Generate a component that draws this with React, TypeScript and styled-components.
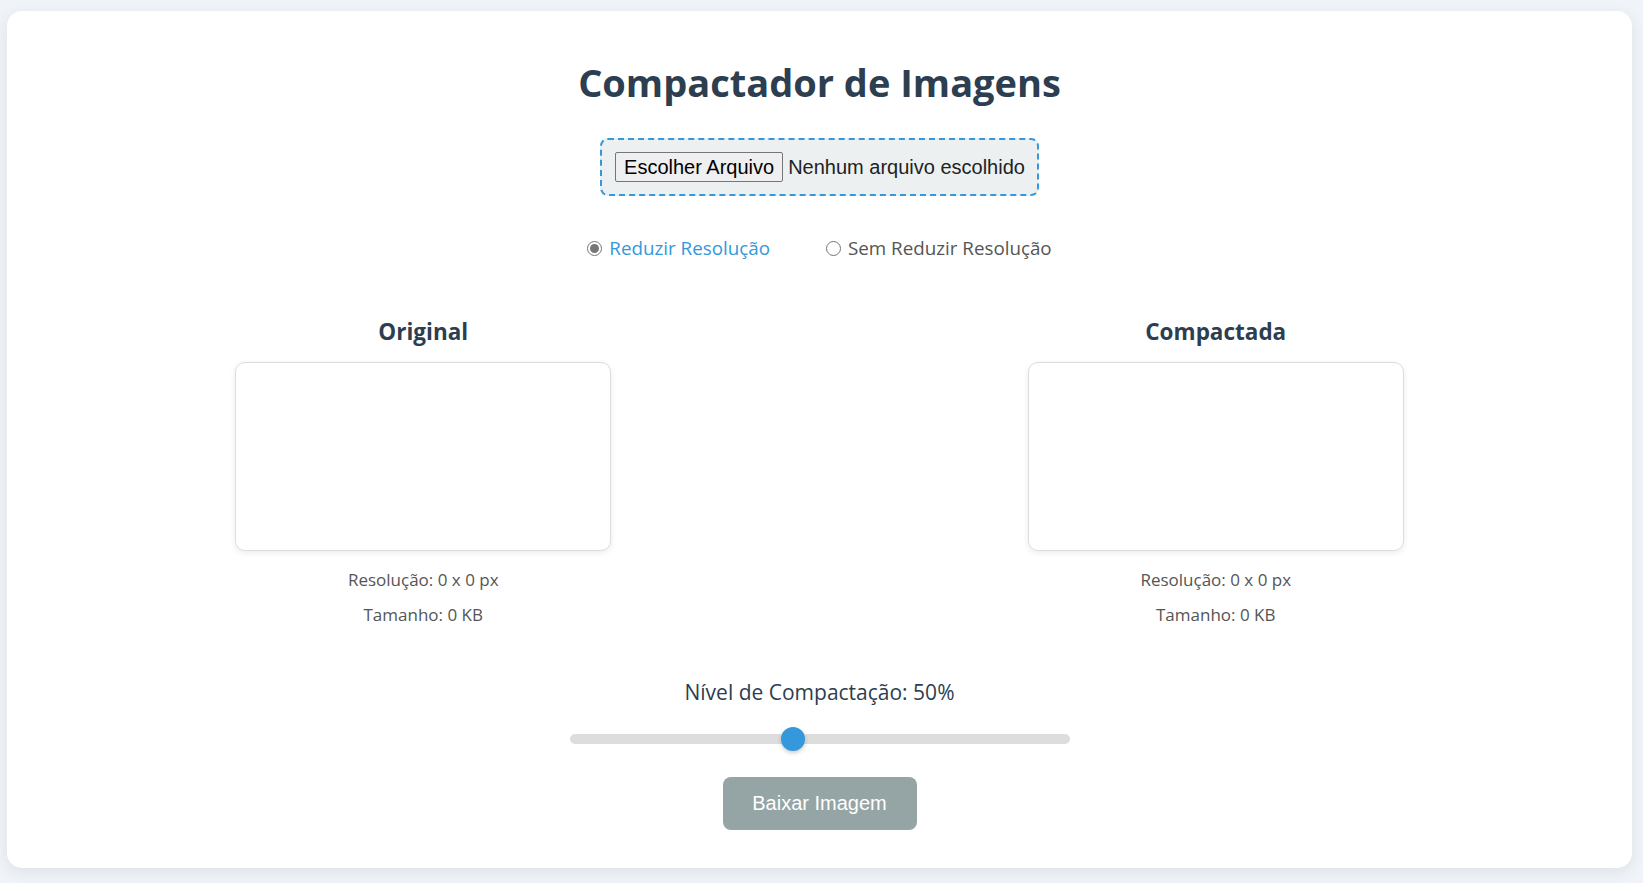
import React, { useState } from 'react';
import styled, { createGlobalStyle } from 'styled-components';

const GlobalStyle = createGlobalStyle`
  body {
    margin: 0;
    background: #f0f4f8;
    font-family: "Open Sans", "Noto Sans", sans-serif;
  }
`;

const Page = styled.div`
  padding: 11px 11px 15px 7px;
`;

const Card = styled.div`
  background: #ffffff;
  border-radius: 15px;
  box-shadow: 0 4px 16px rgba(0, 0, 0, 0.08);
  padding: 44px 40px 38px;
  text-align: center;
`;

const Title = styled.h1`
  margin: 0 0 29px;
  font-size: 38px;
  line-height: 54px;
  font-weight: 700;
  color: #2c3e50;
`;

const UploadBox = styled.div`
  display: inline-flex;
  align-items: center;
  gap: 5px;
  padding: 12px 12px 12px 13px;
  border: 2px dashed #3498db;
  border-radius: 8px;
  background: #ecf0f1;
`;

const FileButton = styled.button`
  font-family: "Liberation Sans", Arial, sans-serif;
  font-size: 20px;
  color: #000;
  background: #efefef;
  border: 1px solid #767676;
  border-radius: 2px;
  padding: 3px 8px;
  line-height: 22px;
`;

const FileName = styled.span`
  font-family: "Liberation Sans", Arial, sans-serif;
  font-size: 20px;
  color: #222;
`;

const RadioRow = styled.div`
  display: flex;
  justify-content: center;
  gap: 56px;
  margin-top: 39px;
`;

const RadioLabel = styled.label<{ $active: boolean }>`
  display: inline-flex;
  align-items: center;
  gap: 7px;
  font-size: 18.8px;
  color: ${(p) => (p.$active ? '#3498db' : '#555555')};
  cursor: pointer;
`;

const RadioDot = styled.input`
  appearance: none;
  margin: 0;
  width: 15px;
  height: 15px;
  border-radius: 50%;
  border: 1px solid #767676;
  background: #fff;
  display: grid;
  place-content: center;

  &:checked::before {
    content: '';
    width: 9px;
    height: 9px;
    border-radius: 50%;
    background: #777;
  }
`;

const Previews = styled.div`
  display: flex;
  gap: 40px;
  margin-top: 56px;
`;

const Column = styled.div`
  flex: 1;
  display: flex;
  flex-direction: column;
  align-items: center;
`;

const ColumnTitle = styled.h3`
  margin: 0 0 15px;
  font-size: 22.5px;
  line-height: 30px;
  font-weight: 700;
  color: #2c3e50;
`;

const PreviewBox = styled.div`
  width: 50%;
  height: 189px;
  box-sizing: border-box;
  border: 1px solid #dddddd;
  border-radius: 10px;
  box-shadow: 0 2px 6px rgba(0, 0, 0, 0.08);
  background: #fff;
`;

const Info = styled.p`
  margin: 19px 0 0;
  font-size: 17px;
  line-height: 20px;
  color: #555555;

  & + & {
    margin-top: 15px;
  }
`;

const SliderBlock = styled.div`
  margin-top: 53px;
  display: flex;
  flex-direction: column;
  align-items: center;
`;

const SliderLabel = styled.div`
  font-size: 21px;
  line-height: 28px;
  color: #2c3e50;
`;

const Range = styled.input`
  appearance: none;
  width: 500px;
  height: 10px;
  margin: 28px 0 0;
  border-radius: 5px;
  background: #dddddd;
  outline: none;

  &::-webkit-slider-thumb {
    appearance: none;
    width: 24px;
    height: 24px;
    border-radius: 50%;
    background: #3498db;
    box-shadow: 0 2px 4px rgba(0, 0, 0, 0.2);
    cursor: pointer;
  }
`;

const DownloadButton = styled.button`
  margin-top: 33px;
  width: 194px;
  height: 53px;
  border: none;
  border-radius: 8px;
  background: #95a5a6;
  color: #ffffff;
  font-family: "Liberation Sans", Arial, sans-serif;
  font-size: 20px;
`;

type PreviewProps = {
  title: string
};

const Preview = (props: PreviewProps) => {
  return (
    <Column>
      <ColumnTitle>{props.title}</ColumnTitle>
      <PreviewBox />
      <Info>Resolução: 0 x 0 px</Info>
      <Info>Tamanho: 0 KB</Info>
    </Column>
  );
};

export default function App() {
  const [reduce, setReduce] = useState(true);
  const [level, setLevel] = useState(50);

  return (
    <Page>
      <GlobalStyle />
      <Card>
        <Title>Compactador de Imagens</Title>
        <UploadBox>
          <FileButton type="button">Escolher Arquivo</FileButton>
          <FileName>Nenhum arquivo escolhido</FileName>
        </UploadBox>

        <RadioRow>
          <RadioLabel $active={reduce}>
            <RadioDot type="radio" name="modo" checked={reduce} onChange={() => setReduce(true)} />
            Reduzir Resolução
          </RadioLabel>
          <RadioLabel $active={!reduce}>
            <RadioDot type="radio" name="modo" checked={!reduce} onChange={() => setReduce(false)} />
            Sem Reduzir Resolução
          </RadioLabel>
        </RadioRow>

        <Previews>
          <Preview title="Original" />
          <Preview title="Compactada" />
        </Previews>

        <SliderBlock>
          <SliderLabel>Nível de Compactação: {level}%</SliderLabel>
          <Range
            type="range"
            min={10}
            max={100}
            value={level}
            onChange={(e) => setLevel(Number(e.target.value))}
          />
          <DownloadButton type="button" disabled>Baixar Imagem</DownloadButton>
        </SliderBlock>
      </Card>
    </Page>
  );
}
